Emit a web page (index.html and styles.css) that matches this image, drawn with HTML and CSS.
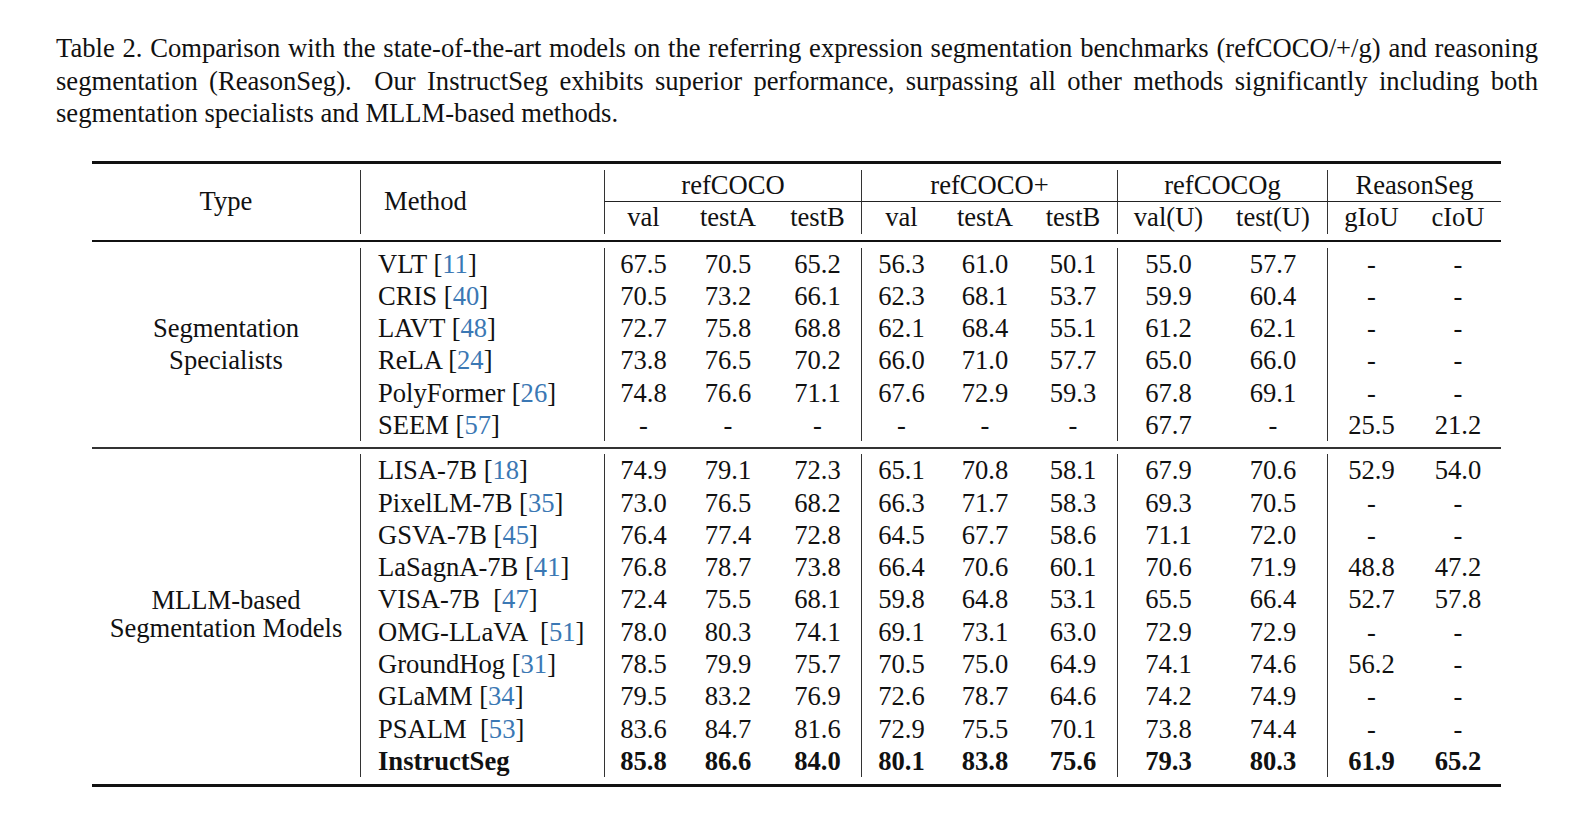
FILE: index.html
```html
<!DOCTYPE html>
<html>
<head>
<meta charset="utf-8">
<link rel="stylesheet" href="styles.css">
</head>
<body>
<div class="page">
  <p class="caption">
    <span class="jline">Table 2. Comparison with the state-of-the-art models on the referring expression segmentation benchmarks (refCOCO/+/g) and reasoning</span>
    <span class="jline">segmentation (ReasonSeg). &nbsp;Our InstructSeg exhibits superior performance, surpassing all other methods significantly including both</span>
    <span class="line">segmentation specialists and MLLM-based methods.</span>
  </p>

  <div class="tbl">
    <div class="sec head">
      <div class="c type hspan">Type</div>
      <div class="c method vl hspan mhead">Method</div>
      <div class="c grp vl g1">refCOCO</div>
      <div class="c grp vl g2">refCOCO+</div>
      <div class="c grp vl g3">refCOCOg</div>
      <div class="c grp vl g4">ReasonSeg</div>
      <div class="c sub vl">val</div><div class="c sub">testA</div><div class="c sub">testB</div>
      <div class="c sub vl">val</div><div class="c sub">testA</div><div class="c sub">testB</div>
      <div class="c sub vl">val(U)</div><div class="c sub">test(U)</div>
      <div class="c sub vl">gIoU</div><div class="c sub">cIoU</div>
    </div>

    <div class="sec body s1">
      <div class="c type tspan1">Segmentation<br>Specialists</div>

      <div class="c method vl">VLT [<span class="ref">11</span>]</div>
      <div class="c vl">67.5</div><div class="c">70.5</div><div class="c">65.2</div>
      <div class="c vl">56.3</div><div class="c">61.0</div><div class="c">50.1</div>
      <div class="c vl">55.0</div><div class="c">57.7</div>
      <div class="c vl">-</div><div class="c">-</div>

      <div class="c method vl">CRIS [<span class="ref">40</span>]</div>
      <div class="c vl">70.5</div><div class="c">73.2</div><div class="c">66.1</div>
      <div class="c vl">62.3</div><div class="c">68.1</div><div class="c">53.7</div>
      <div class="c vl">59.9</div><div class="c">60.4</div>
      <div class="c vl">-</div><div class="c">-</div>

      <div class="c method vl">LAVT [<span class="ref">48</span>]</div>
      <div class="c vl">72.7</div><div class="c">75.8</div><div class="c">68.8</div>
      <div class="c vl">62.1</div><div class="c">68.4</div><div class="c">55.1</div>
      <div class="c vl">61.2</div><div class="c">62.1</div>
      <div class="c vl">-</div><div class="c">-</div>

      <div class="c method vl">ReLA [<span class="ref">24</span>]</div>
      <div class="c vl">73.8</div><div class="c">76.5</div><div class="c">70.2</div>
      <div class="c vl">66.0</div><div class="c">71.0</div><div class="c">57.7</div>
      <div class="c vl">65.0</div><div class="c">66.0</div>
      <div class="c vl">-</div><div class="c">-</div>

      <div class="c method vl">PolyFormer [<span class="ref">26</span>]</div>
      <div class="c vl">74.8</div><div class="c">76.6</div><div class="c">71.1</div>
      <div class="c vl">67.6</div><div class="c">72.9</div><div class="c">59.3</div>
      <div class="c vl">67.8</div><div class="c">69.1</div>
      <div class="c vl">-</div><div class="c">-</div>

      <div class="c method vl">SEEM [<span class="ref">57</span>]</div>
      <div class="c vl">-</div><div class="c">-</div><div class="c">-</div>
      <div class="c vl">-</div><div class="c">-</div><div class="c">-</div>
      <div class="c vl">67.7</div><div class="c">-</div>
      <div class="c vl">25.5</div><div class="c">21.2</div>
    </div>

    <div class="sec body s2">
      <div class="c type tspan2">MLLM-based<br>Segmentation Models</div>

      <div class="c method vl">LISA-7B [<span class="ref">18</span>]</div>
      <div class="c vl">74.9</div><div class="c">79.1</div><div class="c">72.3</div>
      <div class="c vl">65.1</div><div class="c">70.8</div><div class="c">58.1</div>
      <div class="c vl">67.9</div><div class="c">70.6</div>
      <div class="c vl">52.9</div><div class="c">54.0</div>

      <div class="c method vl">PixelLM-7B [<span class="ref">35</span>]</div>
      <div class="c vl">73.0</div><div class="c">76.5</div><div class="c">68.2</div>
      <div class="c vl">66.3</div><div class="c">71.7</div><div class="c">58.3</div>
      <div class="c vl">69.3</div><div class="c">70.5</div>
      <div class="c vl">-</div><div class="c">-</div>

      <div class="c method vl">GSVA-7B [<span class="ref">45</span>]</div>
      <div class="c vl">76.4</div><div class="c">77.4</div><div class="c">72.8</div>
      <div class="c vl">64.5</div><div class="c">67.7</div><div class="c">58.6</div>
      <div class="c vl">71.1</div><div class="c">72.0</div>
      <div class="c vl">-</div><div class="c">-</div>

      <div class="c method vl">LaSagnA-7B [<span class="ref">41</span>]</div>
      <div class="c vl">76.8</div><div class="c">78.7</div><div class="c">73.8</div>
      <div class="c vl">66.4</div><div class="c">70.6</div><div class="c">60.1</div>
      <div class="c vl">70.6</div><div class="c">71.9</div>
      <div class="c vl">48.8</div><div class="c">47.2</div>

      <div class="c method vl">VISA-7B &nbsp;[<span class="ref">47</span>]</div>
      <div class="c vl">72.4</div><div class="c">75.5</div><div class="c">68.1</div>
      <div class="c vl">59.8</div><div class="c">64.8</div><div class="c">53.1</div>
      <div class="c vl">65.5</div><div class="c">66.4</div>
      <div class="c vl">52.7</div><div class="c">57.8</div>

      <div class="c method vl">OMG-LLaVA &nbsp;[<span class="ref">51</span>]</div>
      <div class="c vl">78.0</div><div class="c">80.3</div><div class="c">74.1</div>
      <div class="c vl">69.1</div><div class="c">73.1</div><div class="c">63.0</div>
      <div class="c vl">72.9</div><div class="c">72.9</div>
      <div class="c vl">-</div><div class="c">-</div>

      <div class="c method vl">GroundHog [<span class="ref">31</span>]</div>
      <div class="c vl">78.5</div><div class="c">79.9</div><div class="c">75.7</div>
      <div class="c vl">70.5</div><div class="c">75.0</div><div class="c">64.9</div>
      <div class="c vl">74.1</div><div class="c">74.6</div>
      <div class="c vl">56.2</div><div class="c">-</div>

      <div class="c method vl">GLaMM [<span class="ref">34</span>]</div>
      <div class="c vl">79.5</div><div class="c">83.2</div><div class="c">76.9</div>
      <div class="c vl">72.6</div><div class="c">78.7</div><div class="c">64.6</div>
      <div class="c vl">74.2</div><div class="c">74.9</div>
      <div class="c vl">-</div><div class="c">-</div>

      <div class="c method vl">PSALM &nbsp;[<span class="ref">53</span>]</div>
      <div class="c vl">83.6</div><div class="c">84.7</div><div class="c">81.6</div>
      <div class="c vl">72.9</div><div class="c">75.5</div><div class="c">70.1</div>
      <div class="c vl">73.8</div><div class="c">74.4</div>
      <div class="c vl">-</div><div class="c">-</div>

      <div class="c method vl b">InstructSeg</div>
      <div class="c vl b">85.8</div><div class="c b">86.6</div><div class="c b">84.0</div>
      <div class="c vl b">80.1</div><div class="c b">83.8</div><div class="c b">75.6</div>
      <div class="c vl b">79.3</div><div class="c b">80.3</div>
      <div class="c vl b">61.9</div><div class="c b">65.2</div>
    </div>
  </div>
</div>
</body>
</html>
```

FILE: styles.css
```css
html, body {
  margin: 0;
  padding: 0;
  background: #ffffff;
}

body {
  font-family: "Liberation Serif", "Times New Roman", serif;
  color: #111;
}

.page {
  width: 1594px;
  height: 815px;
  overflow: hidden;
}

.caption {
  margin: 32px 0 0 56px;
  width: 1482px;
  font-size: 26.6px;
  line-height: 32.5px;
}

.caption .jline {
  display: block;
  text-align: justify;
  text-align-last: justify;
}

.caption .line {
  display: block;
}

.tbl {
  margin: 31px 0 0 92px;
  width: 1409px;
  border-top: 3px solid #111;
  border-bottom: 3px solid #111;
  font-size: 26.6px;
}

.sec {
  display: grid;
  grid-template-columns: 268px 244px 78px 92px 87px 80px 88px 88px 102px 108px 88px 86px;
}

.head {
  padding: 6px 0 6px;
  grid-template-rows: 32px 32px;
  border-bottom: 2px solid #111;
}

.body {
  grid-auto-rows: 32.3px;
  line-height: 32.3px;
}

.s1 {
  padding: 6px 0 6px;
  border-bottom: 2px solid #333;
}

.s2 {
  padding: 5px 0 7px;
}

.c {
  text-align: center;
  white-space: nowrap;
}

.vl {
  border-left: 1px solid #333;
}

.head .c {
  display: flex;
  align-items: center;
  justify-content: center;
}

.hspan {
  grid-row: 1 / span 2;
}

.head .method {
  justify-content: flex-start;
  padding-left: 23px;
}

.grp {
  border-bottom: 1px solid #222;
}

.g1 { grid-column: 3 / span 3; }
.g2 { grid-column: 6 / span 3; }
.g3 { grid-column: 9 / span 2; }
.g4 { grid-column: 11 / span 2; }

.method {
  text-align: left;
  padding-left: 17px;
}

.type {
  grid-column: 1;
  display: flex;
  align-items: center;
  justify-content: center;
  text-align: center;
}

.tspan1 {
  grid-row: 1 / span 6;
  line-height: 32.3px;
}

.tspan2 {
  grid-row: 1 / span 10;
  line-height: 28px;
  padding-bottom: 4px;
}

.ref {
  color: #3b78b4;
}

.b {
  font-weight: bold;
}
```
